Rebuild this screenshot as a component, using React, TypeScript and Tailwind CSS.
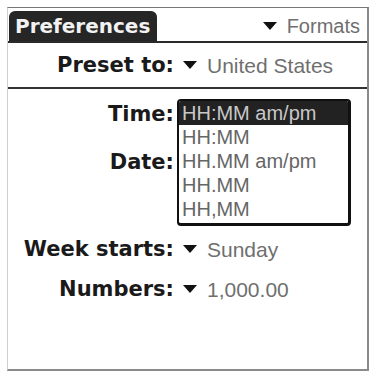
import React from 'react';

const labelFont = { fontFamily: '"DejaVu Sans", sans-serif' };
const valueFont = { fontFamily: '"Liberation Sans", Arial, sans-serif' };

function Arrow() {
    return (
        <svg width="14" height="8" viewBox="0 0 14 8" className="shrink-0">
            <polygon points="0,0 14,0 7,8" fill="#111" />
        </svg>
    );
}

function Row({ label, value, className = '' }: { label: string; value?: string; className?: string }) {
    return (
        <div className={`grid grid-cols-[166px_1fr] items-center h-[24px] ${className}`}>
            <span style={labelFont} className="text-right text-[21px] font-bold leading-none text-[#1a1a1a]">
                {label}
            </span>
            {value && (
                <div className="flex items-center ml-[9px] gap-[10px]">
                    <Arrow />
                    <span style={valueFont} className="text-[21px] leading-none text-[#6f6f6f] whitespace-nowrap">
                        {value}
                    </span>
                </div>
            )}
        </div>
    );
}

const timeFormats = ['HH:MM am/pm', 'HH:MM', 'HH.MM am/pm', 'HH.MM', 'HH,MM'];

export default function App() {
    return (
        <div className="w-[370px] h-[373px] bg-white pt-[7px] pl-[7px] pr-[1px] pb-[2px]">
            <div className="h-[364px] flex flex-col border-t border-t-[#777] border-l border-l-[#cfcfcf] border-r-2 border-r-[#8a8a8a] border-b-2 border-b-[#8a8a8a]">
                {/* Title bar */}
                <div className="h-[35px] shrink-0 flex items-end border-b-2 border-[#2a2a2a]">
                    <div className="ml-[1px] w-[148px] h-[30px] bg-[#262626] rounded-t-[6px] flex items-center pl-[6px]">
                        <span style={labelFont} className="text-[20px] font-bold leading-none text-[#f2f2f2]">
                            Preferences
                        </span>
                    </div>
                    <div className="ml-auto mr-[7px] h-[30px] flex items-center gap-[10px]">
                        <Arrow />
                        <span style={valueFont} className="text-[20px] leading-none text-[#6f6f6f]">Formats</span>
                    </div>
                </div>

                {/* Preset */}
                <div className="h-[46px] shrink-0 flex items-center border-b-2 border-[#333]">
                    <Row label="Preset to:" value="United States" className="w-full" />
                </div>

                {/* Formats */}
                <div className="relative flex-1 flex flex-col">
                    <Row label="Time:" className="mt-[13px]" />
                    <Row label="Date:" className="mt-[24px]" />
                    <Row label="Week starts:" value="Sunday" className="mt-[63px]" />
                    <Row label="Numbers:" value="1,000.00" className="mt-[16px]" />

                    {/* Open time list */}
                    <div className="absolute left-[169px] top-[10px] w-[174px] bg-white border-2 border-b-[3px] border-r-[3px] border-[#111] rounded-[4px] pb-[2px] overflow-hidden">
                        {timeFormats.map((f, i) => (
                            <div
                                key={f}
                                style={valueFont}
                                className={`h-[24px] flex items-center pl-[3px] text-[20px] leading-none whitespace-nowrap ${
                                    i === 0 ? 'bg-[#222] text-[#c8c8c8]' : 'text-[#666]'
                                }`}
                            >
                                {f}
                            </div>
                        ))}
                    </div>
                </div>
            </div>
        </div>
    );
}
